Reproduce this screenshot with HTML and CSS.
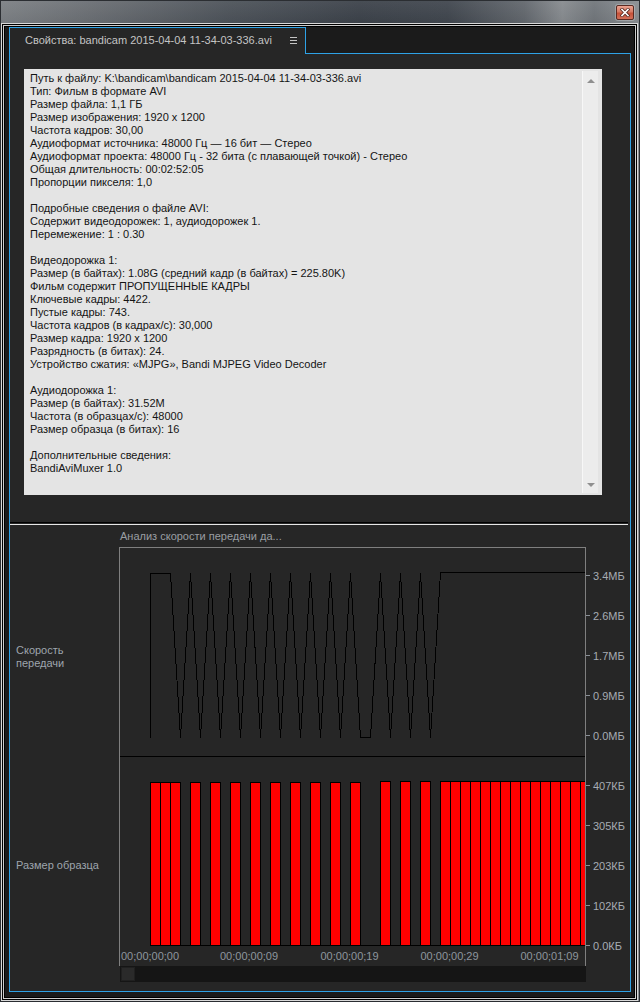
FILE: index.html
```html
<!DOCTYPE html>
<html lang="ru">
<head>
<meta charset="utf-8">
<title>Свойства: bandicam 2015-04-04 11-34-03-336.avi</title>
<link rel="stylesheet" href="styles.css">
</head>
<body>
<div class="window">
  <div class="titlebar">
    <div class="close-btn">
      <svg width="10" height="9" viewBox="0 0 10 9">
        <path d="M2 1.5 L8 7.5 M8 1.5 L2 7.5" stroke="#5a2a22" stroke-width="3.2" stroke-linecap="square"/>
        <path d="M2 1.5 L8 7.5 M8 1.5 L2 7.5" stroke="#ffffff" stroke-width="1.6" stroke-linecap="square"/>
      </svg>
    </div>
  </div>
  <div class="frame"><div class="frame-b"><div class="frame-c"><div class="frame-d">
    <div class="panel">
      <div class="tabs">
        <div class="tab">
          <span class="tab-title">Свойства: bandicam 2015-04-04 11-34-03-336.avi</span>
          <svg class="tab-menu" width="7" height="7" viewBox="0 0 7 7">
            <path d="M0 0.5 H7 M0 3.5 H7 M0 6.5 H7" stroke="#c4c4c4" stroke-width="1"/>
          </svg>
        </div>
        <div class="tab-fill"></div>
      </div>
      <div class="panel-body">
        <div class="info-section">
          <div class="info-box">
            <div class="info-text">
              <div class="ln">Путь к файлу: K:\bandicam\bandicam 2015-04-04 11-34-03-336.avi</div>
              <div class="ln">Тип: Фильм в формате AVI</div>
              <div class="ln">Размер файла: 1,1 ГБ</div>
              <div class="ln">Размер изображения: 1920 x 1200</div>
              <div class="ln">Частота кадров: 30,00</div>
              <div class="ln">Аудиоформат источника: 48000 Гц — 16 бит — Стерео</div>
              <div class="ln">Аудиоформат проекта: 48000 Гц - 32 бита (с плавающей точкой) - Стерео</div>
              <div class="ln">Общая длительность: 00:02:52:05</div>
              <div class="ln">Пропорции пикселя: 1,0</div>
              <div class="ln blank"></div>
              <div class="ln">Подробные сведения о файле AVI:</div>
              <div class="ln">Содержит видеодорожек: 1, аудиодорожек 1.</div>
              <div class="ln">Перемежение: 1 : 0.30</div>
              <div class="ln blank"></div>
              <div class="ln">Видеодорожка 1:</div>
              <div class="ln">Размер (в байтах): 1.08G (средний кадр (в байтах) = 225.80K)</div>
              <div class="ln">Фильм содержит ПРОПУЩЕННЫЕ КАДРЫ</div>
              <div class="ln">Ключевые кадры: 4422.</div>
              <div class="ln">Пустые кадры: 743.</div>
              <div class="ln">Частота кадров (в кадрах/с): 30,000</div>
              <div class="ln">Размер кадра: 1920 x 1200</div>
              <div class="ln">Разрядность (в битах): 24.</div>
              <div class="ln">Устройство сжатия: «MJPG», Bandi MJPEG Video Decoder</div>
              <div class="ln blank"></div>
              <div class="ln">Аудиодорожка 1:</div>
              <div class="ln">Размер (в байтах): 31.52M</div>
              <div class="ln">Частота (в образцах/с): 48000</div>
              <div class="ln">Размер образца (в битах): 16</div>
              <div class="ln blank"></div>
              <div class="ln">Дополнительные сведения:</div>
              <div class="ln">BandiAviMuxer 1.0</div>
            </div>
            <div class="vscroll">
              <span class="arrow-up"></span>
              <span class="arrow-down"></span>
            </div>
          </div>
        </div>
        <div class="divider"></div>
        <div class="analysis">
          <div class="chart-title">Анализ скорости передачи да...</div>
          <div class="row-labels">
            <div class="row-label rate">Скорость<br>передачи</div>
            <div class="row-label sample">Размер образца</div>
          </div>
          <svg class="chart" width="510" height="419" viewBox="0 0 510 419">
            <defs>
              <clipPath id="plot"><rect x="0" y="0" width="466" height="419"/></clipPath>
            </defs>
            <!-- rate line -->
            <path class="rate-line" d="M31.5 190.5 V26.5 H51.5 L61.5 190.5 L71.5 26.5 L81.5 190.5 L91.5 26.5 L101.5 190.5 L111.5 26.5 L121.5 190.5 L131.5 26.5 L141.5 190.5 L151.5 26.5 L161.5 190.5 L171.5 26.5 L181.5 190.5 L191.5 26.5 L201.5 190.5 L211.5 26.5 L221.5 190.5 L231.5 26.5 L241.5 190.5 H251.5 L261.5 26.5 L271.5 190.5 L281.5 26.5 L291.5 190.5 L301.5 26.5 L311.5 190.5 L321.5 25.5 H466"/>
            <!-- separator -->
            <path class="sep" d="M1 209.5 H466"/>
            <!-- bars -->
            <g class="bars" clip-path="url(#plot)">
              <path class="base" d="M31 398.5 H466"/>
              <rect x="31.5" y="235.5" width="10" height="163"/>
              <rect x="41.5" y="235.5" width="10" height="163"/>
              <rect x="51.5" y="235.5" width="10" height="163"/>
              <rect x="71.5" y="235.5" width="10" height="163"/>
              <rect x="91.5" y="235.5" width="10" height="163"/>
              <rect x="111.5" y="235.5" width="10" height="163"/>
              <rect x="131.5" y="235.5" width="10" height="163"/>
              <rect x="151.5" y="235.5" width="10" height="163"/>
              <rect x="171.5" y="235.5" width="10" height="163"/>
              <rect x="191.5" y="235.5" width="10" height="163"/>
              <rect x="211.5" y="235.5" width="10" height="163"/>
              <rect x="231.5" y="235.5" width="10" height="163"/>
              <rect x="261.5" y="234.5" width="10" height="164"/>
              <rect x="281.5" y="234.5" width="10" height="164"/>
              <rect x="301.5" y="234.5" width="10" height="164"/>
              <rect x="321.5" y="234.5" width="10" height="164"/>
              <rect x="331.5" y="234.5" width="10" height="164"/>
              <rect x="341.5" y="234.5" width="10" height="164"/>
              <rect x="351.5" y="234.5" width="10" height="164"/>
              <rect x="361.5" y="234.5" width="10" height="164"/>
              <rect x="371.5" y="234.5" width="10" height="164"/>
              <rect x="381.5" y="234.5" width="10" height="164"/>
              <rect x="391.5" y="234.5" width="10" height="164"/>
              <rect x="401.5" y="234.5" width="10" height="164"/>
              <rect x="411.5" y="234.5" width="10" height="164"/>
              <rect x="421.5" y="234.5" width="10" height="164"/>
              <rect x="431.5" y="234.5" width="10" height="164"/>
              <rect x="441.5" y="234.5" width="10" height="164"/>
              <rect x="451.5" y="234.5" width="10" height="164"/>
              <rect x="461.5" y="234.5" width="10" height="164"/>
            </g>
            <!-- frame -->
            <path class="box" d="M0.5 419 V0.5 H466.5 V419"/>
            <!-- ticks -->
            <path class="tick" d="M467 28.5 H471 M467 68.5 H471 M467 108.5 H471 M467 148.5 H471 M467 188.5 H471 M467 238.5 H471 M467 278.5 H471 M467 318.5 H471 M467 358.5 H471 M467 398.5 H471"/>
            <text class="axis" x="474" y="32.5">3.4МБ</text>
            <text class="axis" x="474" y="72.5">2.6МБ</text>
            <text class="axis" x="474" y="112.5">1.7МБ</text>
            <text class="axis" x="474" y="152.5">0.9МБ</text>
            <text class="axis" x="474" y="192.5">0.0МБ</text>
            <text class="axis" x="474" y="242.5">407КБ</text>
            <text class="axis" x="474" y="282.5">305КБ</text>
            <text class="axis" x="474" y="322.5">203КБ</text>
            <text class="axis" x="474" y="362.5">102КБ</text>
            <text class="axis" x="474" y="402.5">0.0КБ</text>
            <text class="time" x="2" y="413">00;00;00;00</text>
            <text class="time" x="101" y="413">00;00;00;09</text>
            <text class="time" x="201.5" y="413">00;00;00;19</text>
            <text class="time" x="301.5" y="413">00;00;00;29</text>
            <text class="time" x="401.5" y="413">00;00;01;09</text>
          </svg>
          <div class="hscroll"><div class="thumb"></div></div>
        </div>
      </div>
    </div>
  </div></div></div></div>
</div>
</body>
</html>
```

FILE: styles.css
```css
* { box-sizing: border-box; }

html, body {
  margin: 0;
  padding: 0;
  background: #000;
}

body {
  font-family: "Liberation Sans", Arial, sans-serif;
  font-size: 11px;
  line-height: 13px;
}

.window {
  width: 640px;
  height: 1002px;
  border: 1px solid #2b2e32;
  background:
    linear-gradient(180deg, rgba(255,255,255,0.06), rgba(0,0,0,0.04) 22px, rgba(0,0,0,0) 23px),
    linear-gradient(90deg, #7c8084 0%, #6a6e73 14%, #4c5259 36%, #3c424a 56%, #40464e 70%, #62676d 82%, #878b8f 88%, #71767b 93%, #8a8e92 100%);
  display: flex;
  flex-direction: column;
}

.titlebar {
  height: 22px;
  flex: none;
  display: flex;
  justify-content: flex-end;
  align-items: flex-start;
  padding: 4px 5px 0 0;
}

.close-btn {
  width: 18px;
  height: 15px;
  border: 1px solid #5b2a22;
  border-radius: 2px;
  background: linear-gradient(180deg, #eba392 0%, #d77a64 45%, #c65038 55%, #d3705a 100%);
  box-shadow: 0 0 0 1px rgba(255,255,255,0.25);
  display: flex;
  align-items: center;
  justify-content: center;
}

.close-btn svg { display: block; }

.frame {
  flex: 1;
  margin-right: 1px;
  border: 1px solid #d9d9d9;
  display: flex;
  flex-direction: column;
}

.frame-b {
  flex: 1;
  border: 1px solid #000;
  display: flex;
  flex-direction: column;
}

.frame-c {
  flex: 1;
  border: 1px solid #cdcdcd;
  display: flex;
  flex-direction: column;
}

.frame-d {
  flex: 1;
  border: 1px solid #000;
  background: #1b1b1b;
  padding: 0 3px 5px 4px;
  display: flex;
  flex-direction: column;
}

.panel {
  flex: 1;
  display: flex;
  flex-direction: column;
}

.tabs {
  height: 27px;
  flex: none;
  display: flex;
}

.tab {
  width: 297px;
  height: 27px;
  border: 1px solid #2ea2e6;
  border-bottom: 0;
  background: #262626;
  display: flex;
  align-items: center;
  padding: 0 8px 1px 15px;
  color: #c4c4c4;
}

.tab-title { white-space: nowrap; }

.tab-menu {
  display: block;
  margin-left: auto;
}

.tab-fill {
  flex: 1;
  height: 27px;
  border-bottom: 1px solid #2ea2e6;
}

.panel-body {
  flex: 1;
  border: 1px solid #2ea2e6;
  border-top: 0;
  background: #262626;
  display: flex;
  flex-direction: column;
}

.info-section {
  padding: 15px 28px 27px 14px;
}

.info-box {
  height: 426px;
  background: #e4e4e4;
  display: flex;
}

.info-text {
  flex: 1;
  padding: 3px 6px;
  color: #141414;
  white-space: nowrap;
  overflow: hidden;
}

.ln { height: 13px; }

.vscroll {
  width: 16px;
  margin: 2px 4px 2px 0;
  background: #ececec;
  border-left: 1px solid #f7f7f7;
  display: flex;
  flex-direction: column;
  justify-content: space-between;
  align-items: center;
  padding: 8px 0 6px;
}

.arrow-up {
  width: 0;
  height: 0;
  border-left: 4px solid transparent;
  border-right: 4px solid transparent;
  border-bottom: 4px solid #8f8f8f;
}

.arrow-down {
  width: 0;
  height: 0;
  border-left: 4px solid transparent;
  border-right: 4px solid transparent;
  border-top: 4px solid #8f8f8f;
}

.divider {
  height: 3px;
  margin-right: 2px;
  border-top: 1px solid #000;
  border-bottom: 1px solid #e6e6e6;
}

.analysis {
  display: grid;
  grid-template-columns: 109px 510px;
  grid-template-rows: 22px 419px 17px;
}

.chart-title {
  grid-column: 2;
  grid-row: 1;
  padding: 5px 0 0 1px;
  color: #9a9ea3;
  white-space: nowrap;
}

.row-labels {
  grid-column: 1;
  grid-row: 2;
  display: flex;
  flex-direction: column;
}

.row-label {
  color: #9ea5ad;
  padding-left: 6px;
}

.row-label.rate {
  height: 209px;
  padding-top: 97px;
}

.row-label.sample {
  height: 210px;
  padding-top: 103px;
}

.chart {
  grid-column: 2;
  grid-row: 2;
  display: block;
}

.rate-line {
  fill: none;
  stroke: #000;
  stroke-width: 1;
  shape-rendering: crispEdges;
}

.sep {
  stroke: #000;
  stroke-width: 1;
  shape-rendering: crispEdges;
}

.bars rect {
  fill: #ff0000;
  stroke: #000;
  stroke-width: 1;
  shape-rendering: crispEdges;
}

.bars .base {
  stroke: #000;
  stroke-width: 1;
  shape-rendering: crispEdges;
}

.box {
  fill: none;
  stroke: #7f7f7f;
  stroke-width: 1;
  shape-rendering: crispEdges;
}

.tick {
  stroke: #8a9097;
  stroke-width: 1;
  shape-rendering: crispEdges;
}

.axis {
  font-family: "Liberation Sans", Arial, sans-serif;
  font-size: 11px;
  fill: #a6acb3;
}

.time {
  font-family: "Liberation Sans", Arial, sans-serif;
  font-size: 11px;
  fill: #8e969e;
}

.hscroll {
  grid-column: 2;
  grid-row: 3;
  margin-left: 1px;
  width: 466px;
  height: 16px;
  background: #151515;
  padding: 1px;
}

.thumb {
  width: 14px;
  height: 14px;
  background: #2a2a2a;
  box-shadow: inset 0 0 0 1px #202020;
}
```
